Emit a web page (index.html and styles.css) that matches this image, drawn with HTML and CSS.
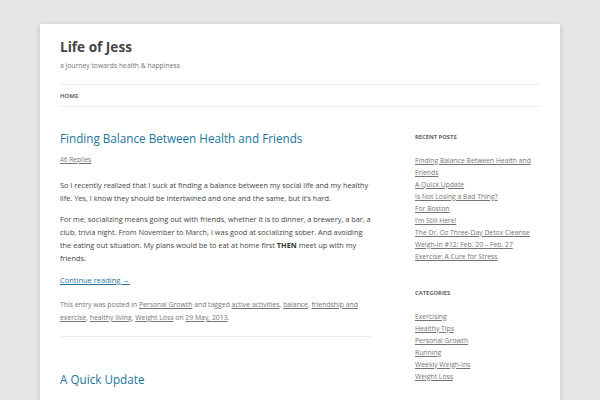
FILE: index.html
```html
<!DOCTYPE html>
<html>
<head>
<meta charset="utf-8">
<link rel="stylesheet" href="styles.css">
</head>
<body>
<div class="site">
  <header class="site-header">
    <h1 class="site-title">Life of Jess</h1>
    <p class="site-desc">a journey towards health &amp; happiness</p>
    <nav class="main-nav"><a href="#">Home</a></nav>
  </header>
  <div class="main">
    <div class="content">
      <article class="post">
        <h2 class="entry-title"><a href="#">Finding Balance Between Health and Friends</a></h2>
        <div class="comments-link"><a href="#">46 Replies</a></div>
        <div class="entry-content">
          <p>So I recently realized that I suck at finding a balance between my social life and my healthy life. Yes, I know they should be intertwined and one and the same, but it’s hard.</p>
          <p>For me, socializing means going out with friends, whether it is to dinner, a brewery, a bar, a club, trivia night. From November to March, I was good at socializing sober. And avoiding the eating out situation. My plans would be to eat at home first <strong>THEN</strong> meet up with my friends.</p>
          <p class="more"><a href="#">Continue reading <span>→</span></a></p>
        </div>
        <footer class="entry-meta">This entry was posted in <a href="#">Personal Growth</a> and tagged <a href="#">active activities</a>, <a href="#">balance</a>, <a href="#">friendship and exercise</a>, <a href="#">healthy living</a>, <a href="#">Weight Loss</a> on <a href="#">29 May, 2013</a>.</footer>
      </article>
      <article class="post second">
        <h2 class="entry-title"><a href="#">A Quick Update</a></h2>
      </article>
    </div>
    <aside class="sidebar">
      <section class="widget">
        <h3 class="widget-title">Recent Posts</h3>
        <ul>
          <li><a href="#">Finding Balance Between Health and Friends</a></li>
          <li><a href="#">A Quick Update</a></li>
          <li><a href="#">Is Not Losing a Bad Thing?</a></li>
          <li><a href="#">For Boston</a></li>
          <li><a href="#">I’m Still Here!</a></li>
          <li><a href="#">The Dr. Oz Three-Day Detox Cleanse</a></li>
          <li><a href="#">Weigh-in #12: Feb. 20 – Feb. 27</a></li>
          <li><a href="#">Exercise: A Cure for Stress</a></li>
        </ul>
      </section>
      <section class="widget">
        <h3 class="widget-title">Categories</h3>
        <ul>
          <li><a href="#">Exercising</a></li>
          <li><a href="#">Healthy Tips</a></li>
          <li><a href="#">Personal Growth</a></li>
          <li><a href="#">Running</a></li>
          <li><a href="#">Weekly Weigh-ins</a></li>
          <li><a href="#">Weight Loss</a></li>
        </ul>
      </section>
    </aside>
  </div>
</div>
</body>
</html>
```
FILE: styles.css
```css
html, body { margin: 0; padding: 0; }
body {
  background: #e6e6e6;
  font-family: "Open Sans", "Liberation Sans", sans-serif;
  color: #444;
  font-size: 7px;
}
a { color: #21759b; }
.site {
  margin: 24px 40px 0;
  background: #fff;
  padding: 0 20px 40px;
  box-shadow: 0 2px 6px rgba(100,100,100,0.3);
  min-height: 400px;
}
.site-header { padding-top: 14px; }
.site-title {
  margin: 0;
  font-size: 13.6px;
  line-height: 18px;
  font-weight: bold;
  color: #444;
}
.site-desc {
  margin: 4.5px 0 0;
  font-size: 6.8px;
  line-height: 10px;
  color: #757575;
}
.main-nav {
  margin-top: 13px;
  border-top: 1px solid #ededed;
  border-bottom: 1px solid #ededed;
  line-height: 21px;
  height: 21px;
}
.main-nav a {
  font-size: 6px;
  font-weight: bold;
  text-transform: uppercase;
  color: #6a6a6a;
  text-decoration: none;
}
.main { display: flex; justify-content: space-between; }
.content { width: 312px; }
.sidebar { width: 125px; }
.entry-title {
  margin: 23px 0 0;
  font-size: 11.7px;
  line-height: 16px;
  font-weight: normal;
}
.entry-title a { text-decoration: none; color: #21759b; }
.comments-link {
  margin-top: 9.5px;
  font-size: 6.6px;
  line-height: 10px;
}
.comments-link a { color: #757575; }
.entry-content { margin-top: 14px; }
.entry-content p {
  width: 313px;
  margin: 0 0 8px;
  font-size: 7.35px;
  line-height: 13px;
}
.entry-content strong { color: #333; }
.entry-content p.more { margin: 9px 0 0; font-size: 7.5px; }
.entry-meta {
  margin-top: 11px;
  font-size: 6.85px;
  line-height: 13px;
  color: #757575;
  padding-bottom: 12px;
  border-bottom: 1px solid #ededed;
}
.entry-meta a { color: #757575; }
.second .entry-title { margin-top: 34px; }
.widget-title {
  margin: 25px 0 0;
  font-size: 5.8px;
  line-height: 10px;
  font-weight: bold;
  text-transform: uppercase;
  color: #636363;
}
.widget ul { list-style: none; margin: 13px 0 0; padding: 0; }
.widget li { font-size: 6.8px; line-height: 12px; }
.widget li a { color: #757575; }
```
